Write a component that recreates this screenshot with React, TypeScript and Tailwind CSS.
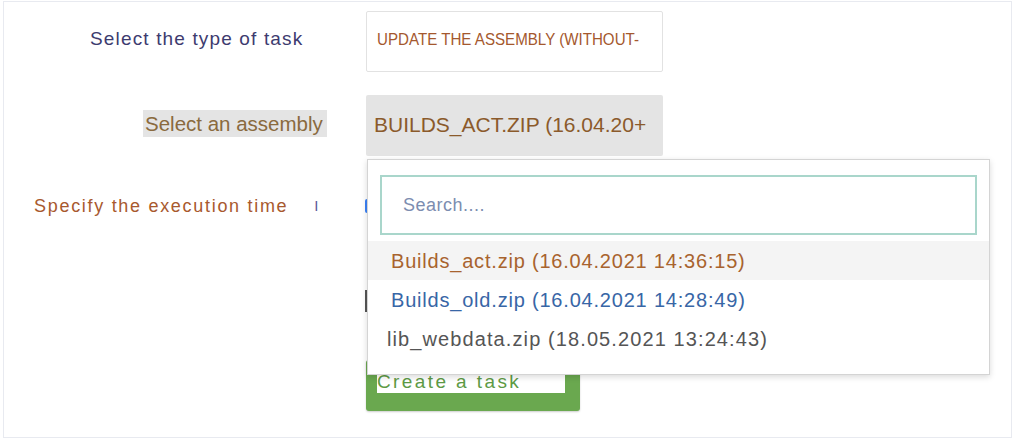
const options = [
  { label: 'Builds_act.zip (16.04.2021 14:36:15)', className: 'bg-[#f4f4f4] pl-[23px] tracking-[0.8px] text-[#a8632e]' },
  { label: 'Builds_old.zip (16.04.2021 14:28:49)', className: 'pl-[23px] tracking-[0.8px] text-[#3866a6]' },
  { label: 'lib_webdata.zip (18.05.2021 13:24:43)', className: 'pl-[19px] tracking-[1.1px] text-[#555555]' },
];

export default function App() {
  return (
    <div className="w-[1014px] h-[441px] bg-white pt-[1px] pl-[3px] pr-[2px] pb-[3px] font-['Liberation_Sans',Arial,sans-serif]">
      <div className="relative h-full border border-[#e8eaf0] bg-white">
        {/* Task type */}
        <div className="flex items-center pt-[9px]">
          <div className="w-[362px] pl-[86px] pb-[5px] text-[19px] tracking-[1.15px] text-[#3d3b6f]">
            Select the type of task
          </div>
          <div className="w-[297px] h-[61px] flex items-center pl-[10px] pb-[4px] border border-[#e2e2e2] rounded-[2px] overflow-hidden">
            <span className="inline-block origin-left scale-x-[0.89] whitespace-nowrap text-[17px] text-[#a4582e]">
              UPDATE THE ASSEMBLY (WITHOUT-
            </span>
          </div>
        </div>

        {/* Assembly */}
        <div className="flex items-center mt-[23px]">
          <div className="w-[362px] pl-[139px] pb-[4px]">
            <span className="inline-block bg-[#e4e4e4] pl-[2px] pr-[4px] h-[27px] leading-[27px] text-[20.5px] text-[#8a6a3e]">
              Select an assembly
            </span>
          </div>
          <div className="w-[297px] h-[61px] flex items-center pl-[8px] pb-[2px] bg-[#e4e4e4] rounded-[2px] overflow-hidden">
            <span className="whitespace-nowrap text-[21px] text-[#8b5a2b]">BUILDS_ACT.ZIP (16.04.20+</span>
          </div>
        </div>

        {/* Execution time */}
        <div className="flex items-center mt-[28px] h-[44px]">
          <div className="w-[361px] flex items-center pl-[30px]">
            <span className="text-[18px] tracking-[1.7px] text-[#a8592e]">Specify the execution time</span>
            <span className="ml-[26px] text-[15px] text-[#5a5a9a]">I</span>
          </div>
          <div className="w-[2px] h-[14px] rounded-l-full bg-[#3b82f6]" />
        </div>

        <div className="flex mt-[62px]">
          <div className="w-[361px]" />
          <div className="w-[2px] h-[22px] bg-[#555555]" />
        </div>

        {/* Create button */}
        <div className="flex mt-[48px]">
          <div className="w-[362px]" />
          <div className="w-[214px] h-[51px] bg-[#6aa84f] rounded-[3px] pl-[11px] shadow-[0_1px_2px_rgba(0,0,0,0.2)]">
            <div className="w-[188px] h-[33px] bg-white flex items-end">
              <span className="text-[19px] leading-[22px] tracking-[2.4px] text-[#5d9a45]">Create a task</span>
            </div>
          </div>
        </div>

        {/* Dropdown */}
        <div className="absolute left-[363px] top-[157px] w-[623px] h-[216px] bg-white border border-[#d4d4d4] shadow-[0_2px_6px_rgba(0,0,0,0.15)]">
          <div className="px-[12px] pt-[15px]">
            <div className="h-[60px] border-2 border-[#a9d6cb] flex items-center pl-[21px]">
              <span className="text-[18px] tracking-[0.5px] text-[#7c8db0]">Search....</span>
            </div>
          </div>
          <div className="mt-[6px]">
            {options.map((o) => (
              <div key={o.label} className={`h-[39px] flex items-center text-[20px] ${o.className}`}>
                {o.label}
              </div>
            ))}
          </div>
        </div>
      </div>
    </div>
  );
}
